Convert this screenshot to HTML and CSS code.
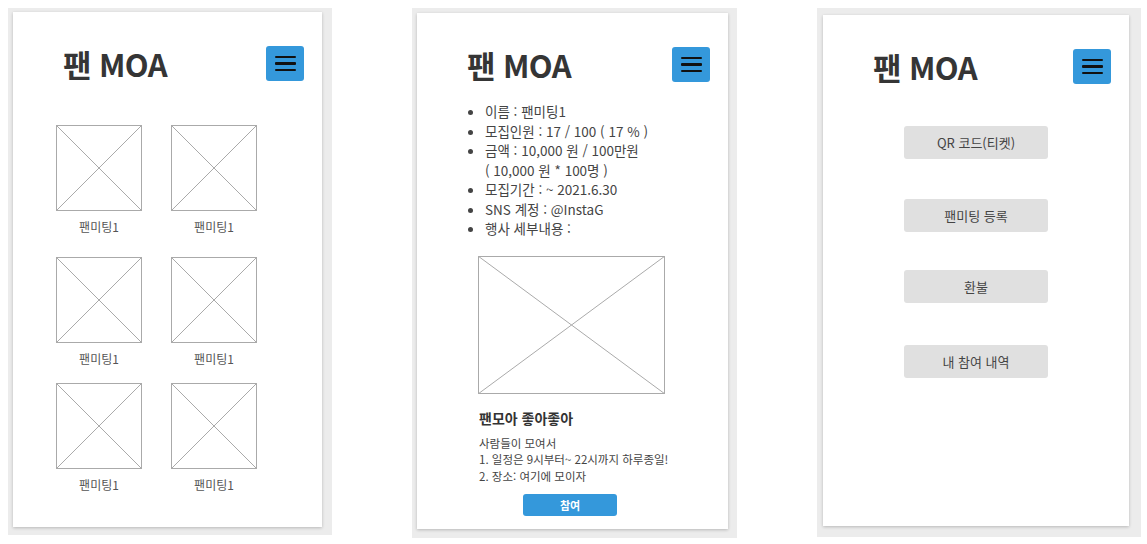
FILE: index.html
```html
<!DOCTYPE html>
<html lang="ko">
<head>
<meta charset="utf-8">
<title>팬 MOA</title>
<link rel="stylesheet" href="styles.css">
</head>
<body>
<div class="screens">
  <section class="frame frame-1">
    <div class="card card-1">
      <header class="head">
        <h1 class="title">팬 MOA</h1>
        <button class="menu" aria-label="menu"><span></span><span></span><span></span></button>
      </header>
      <div class="grid">
        <div class="tile"><svg class="ph" viewBox="0 0 86 86" preserveAspectRatio="none"><rect x="0.5" y="0.5" width="85" height="85"/><line x1="0" y1="0" x2="86" y2="86"/><line x1="86" y1="0" x2="0" y2="86"/></svg><span class="lbl">팬미팅1</span></div>
        <div class="tile"><svg class="ph" viewBox="0 0 86 86" preserveAspectRatio="none"><rect x="0.5" y="0.5" width="85" height="85"/><line x1="0" y1="0" x2="86" y2="86"/><line x1="86" y1="0" x2="0" y2="86"/></svg><span class="lbl">팬미팅1</span></div>
        <div class="tile"><svg class="ph" viewBox="0 0 86 86" preserveAspectRatio="none"><rect x="0.5" y="0.5" width="85" height="85"/><line x1="0" y1="0" x2="86" y2="86"/><line x1="86" y1="0" x2="0" y2="86"/></svg><span class="lbl">팬미팅1</span></div>
        <div class="tile"><svg class="ph" viewBox="0 0 86 86" preserveAspectRatio="none"><rect x="0.5" y="0.5" width="85" height="85"/><line x1="0" y1="0" x2="86" y2="86"/><line x1="86" y1="0" x2="0" y2="86"/></svg><span class="lbl">팬미팅1</span></div>
        <div class="tile"><svg class="ph" viewBox="0 0 86 86" preserveAspectRatio="none"><rect x="0.5" y="0.5" width="85" height="85"/><line x1="0" y1="0" x2="86" y2="86"/><line x1="86" y1="0" x2="0" y2="86"/></svg><span class="lbl">팬미팅1</span></div>
        <div class="tile"><svg class="ph" viewBox="0 0 86 86" preserveAspectRatio="none"><rect x="0.5" y="0.5" width="85" height="85"/><line x1="0" y1="0" x2="86" y2="86"/><line x1="86" y1="0" x2="0" y2="86"/></svg><span class="lbl">팬미팅1</span></div>
      </div>
    </div>
  </section>

  <section class="frame frame-2">
    <div class="card card-2">
      <header class="head">
        <h1 class="title">팬 MOA</h1>
        <button class="menu" aria-label="menu"><span></span><span></span><span></span></button>
      </header>
      <ul class="info">
        <li>이름 : 팬미팅1</li>
        <li>모집인원 : 17 / 100 ( 17 % )</li>
        <li>금액 : 10,000 원 / 100만원<br>( 10,000 원 * 100명 )</li>
        <li>모집기간 : ~ 2021.6.30</li>
        <li>SNS 계정 : @InstaG</li>
        <li>행사 세부내용 :</li>
      </ul>
      <div class="detail">
        <svg class="ph ph-wide" viewBox="0 0 187 138" preserveAspectRatio="none"><rect x="0.5" y="0.5" width="186" height="137"/><line x1="0" y1="0" x2="187" y2="138"/><line x1="187" y1="0" x2="0" y2="138"/></svg>
        <h2 class="event">팬모아 좋아좋아</h2>
        <p class="desc">사람들이 모여서<br>1. 일정은 9시부터~ 22시까지 하루종일!<br>2. 장소: 여기에 모이자</p>
        <button class="join">참여</button>
      </div>
    </div>
  </section>

  <section class="frame frame-3">
    <div class="card card-3">
      <header class="head">
        <h1 class="title">팬 MOA</h1>
        <button class="menu" aria-label="menu"><span></span><span></span><span></span></button>
      </header>
      <nav class="actions">
        <button class="act">QR 코드(티켓)</button>
        <button class="act">팬미팅 등록</button>
        <button class="act act-3">환불</button>
        <button class="act act-4">내 참여 내역</button>
      </nav>
    </div>
  </section>
</div>
</body>
</html>
```
FILE: styles.css
```css
* { box-sizing: border-box; }
body {
  margin: 0;
  background: #fff;
  font-family: "Noto Sans CJK KR", "Noto Sans", sans-serif;
  color: #444;
}
.screens {
  display: flex;
  align-items: flex-start;
  gap: 80px;
  padding: 8px 0 0 8px;
}
.frame {
  background: #ececec;
  width: 324px;
}
.frame-1 { padding: 4px 10px 8px 5px; }
.frame-2 { width: 325px; padding: 5px 9px 9px 5px; }
.frame-3 { padding: 7px 12px 11px 6px; }
.card {
  background: #fff;
  box-shadow: 0 1px 3px rgba(0,0,0,0.22);
}
.card-1 { height: 515px; }
.card-2 { height: 516px; }
.card-3 { height: 511px; }

.head {
  display: flex;
  justify-content: space-between;
  align-items: center;
  padding: 34px 18px 0 50px;
}
.title {
  margin: 0;
  font-size: 31px;
  font-weight: 700;
  color: #353535;
  line-height: 35px;
  letter-spacing: -0.6px;
}
.menu {
  width: 38px;
  height: 35px;
  border: 0;
  border-radius: 3px;
  background: #3498db;
  padding: 0;
  display: flex;
  flex-direction: column;
  align-items: center;
  justify-content: center;
  gap: 4px;
}
.menu span {
  display: block;
  width: 21px;
  height: 2.5px;
  background: #111;
  border-radius: 1px;
}

.ph rect { fill: #fff; stroke: #aaa; stroke-width: 1; vector-effect: non-scaling-stroke; }
.ph line { stroke: #aaa; stroke-width: 1; vector-effect: non-scaling-stroke; }
.ph { display: block; width: 86px; height: 86px; }

.grid {
  display: grid;
  grid-template-columns: 86px 86px;
  column-gap: 29px;
  row-gap: 16px;
  padding: 44px 0 0 43px;
}
.tile:nth-child(-n+2) { margin-bottom: 6px; }
.tile {
  display: flex;
  flex-direction: column;
  align-items: center;
}
.lbl {
  font-size: 12px;
  color: #555;
  line-height: 16px;
  margin-top: 8px;
}

.info {
  margin: 20px 0 0;
  padding-left: 68px;
  font-size: 13.5px;
  line-height: 19.5px;
  color: #444;
}
.detail {
  padding: 17px 0 0 61px;
}
.ph-wide { width: 187px; height: 138px; }
.event {
  margin: 14px 0 0 1px;
  font-size: 14px;
  font-weight: 700;
  line-height: 20px;
  color: #333;
}
.desc {
  margin: 7px 0 0 1px;
  font-size: 11.5px;
  line-height: 16.5px;
  color: #444;
}
.join {
  display: block;
  margin: 10px 0 0 45px;
  width: 94px;
  height: 22px;
  border: 0;
  border-radius: 3px;
  background: #3498db;
  color: #fff;
  font-family: inherit;
  font-size: 11px;
  font-weight: 700;
  padding: 0;
}

.actions {
  display: flex;
  flex-direction: column;
  align-items: center;
  gap: 40px;
  padding-top: 42px;
}
.act {
  width: 144px;
  height: 33px;
  border: 0;
  border-radius: 3px;
  background: #e0e0e0;
  color: #444;
  font-family: inherit;
  font-size: 13px;
  padding: 0;
}
.act-3 { margin-top: -2px; }
.act-4 { margin-top: 2px; }
```
